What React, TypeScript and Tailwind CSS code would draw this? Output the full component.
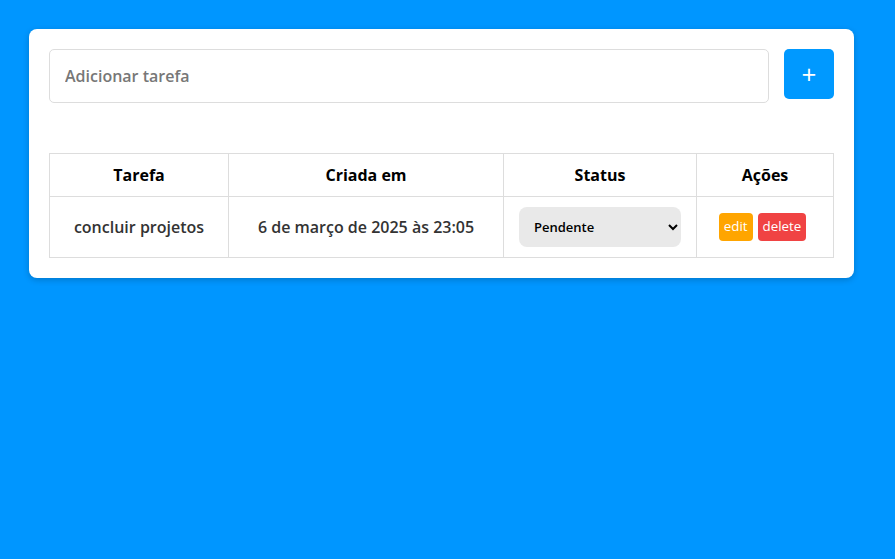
export default function App() {
  return (
    <div
      className="min-h-[559px] bg-[#0096ff] pt-[29px] pl-[29px]"
      style={{ fontFamily: '"Open Sans", sans-serif' }}
    >
      <div className="w-[825px] rounded-lg bg-white p-5 shadow-[0_2px_6px_rgba(0,0,0,0.2)]">
        <div className="flex gap-[15px]">
          <input
            className="h-[54px] w-[720px] rounded-[5px] border border-[#dddddd] px-[15px] text-base font-semibold text-[#333] placeholder:text-[#777] outline-none"
            placeholder="Adicionar tarefa"
          />
          <button className="flex h-[50px] w-[50px] items-center justify-center rounded-[5px] bg-[#0099ff] text-[26px] leading-none text-white">
            +
          </button>
        </div>

        <table className="mt-[50px] w-[785px] border-collapse text-center">
          <thead>
            <tr className="h-[43px]">
              <th className="w-[179px] border border-[#dddddd] text-base font-bold text-black">Tarefa</th>
              <th className="w-[275px] border border-[#dddddd] text-base font-bold text-black">Criada em</th>
              <th className="w-[193px] border border-[#dddddd] text-base font-bold text-black">Status</th>
              <th className="border border-[#dddddd] text-base font-bold text-black">Ações</th>
            </tr>
          </thead>
          <tbody>
            <tr className="h-[61px]">
              <td className="border border-[#dddddd] text-base font-semibold text-[#333]">concluir projetos</td>
              <td className="border border-[#dddddd] text-base font-semibold text-[#333]">6 de março de 2025 às 23:05</td>
              <td className="border border-[#dddddd]">
                <div className="flex justify-center">
                  <select
                    defaultValue="pendente"
                    className="h-10 w-[162px] rounded-lg bg-[#e9e9e9] pl-[11px] pr-1 text-[13px] font-semibold text-black outline-none"
                  >
                    <option value="pendente">Pendente</option>
                    <option value="andamento">Em andamento</option>
                    <option value="concluida">Concluída</option>
                  </select>
                </div>
              </td>
              <td className="border border-[#dddddd]">
                <div className="flex items-center justify-center">
                  <button className="mr-[5px] h-7 rounded-[4px] bg-[#ffa500] px-[5px] text-[13.33px] text-white">edit</button>
                  <button className="mr-[5px] h-7 rounded-[4px] bg-[#f04343] px-[5px] text-[13.33px] text-white">delete</button>
                </div>
              </td>
            </tr>
          </tbody>
        </table>
      </div>
    </div>
  );
}
